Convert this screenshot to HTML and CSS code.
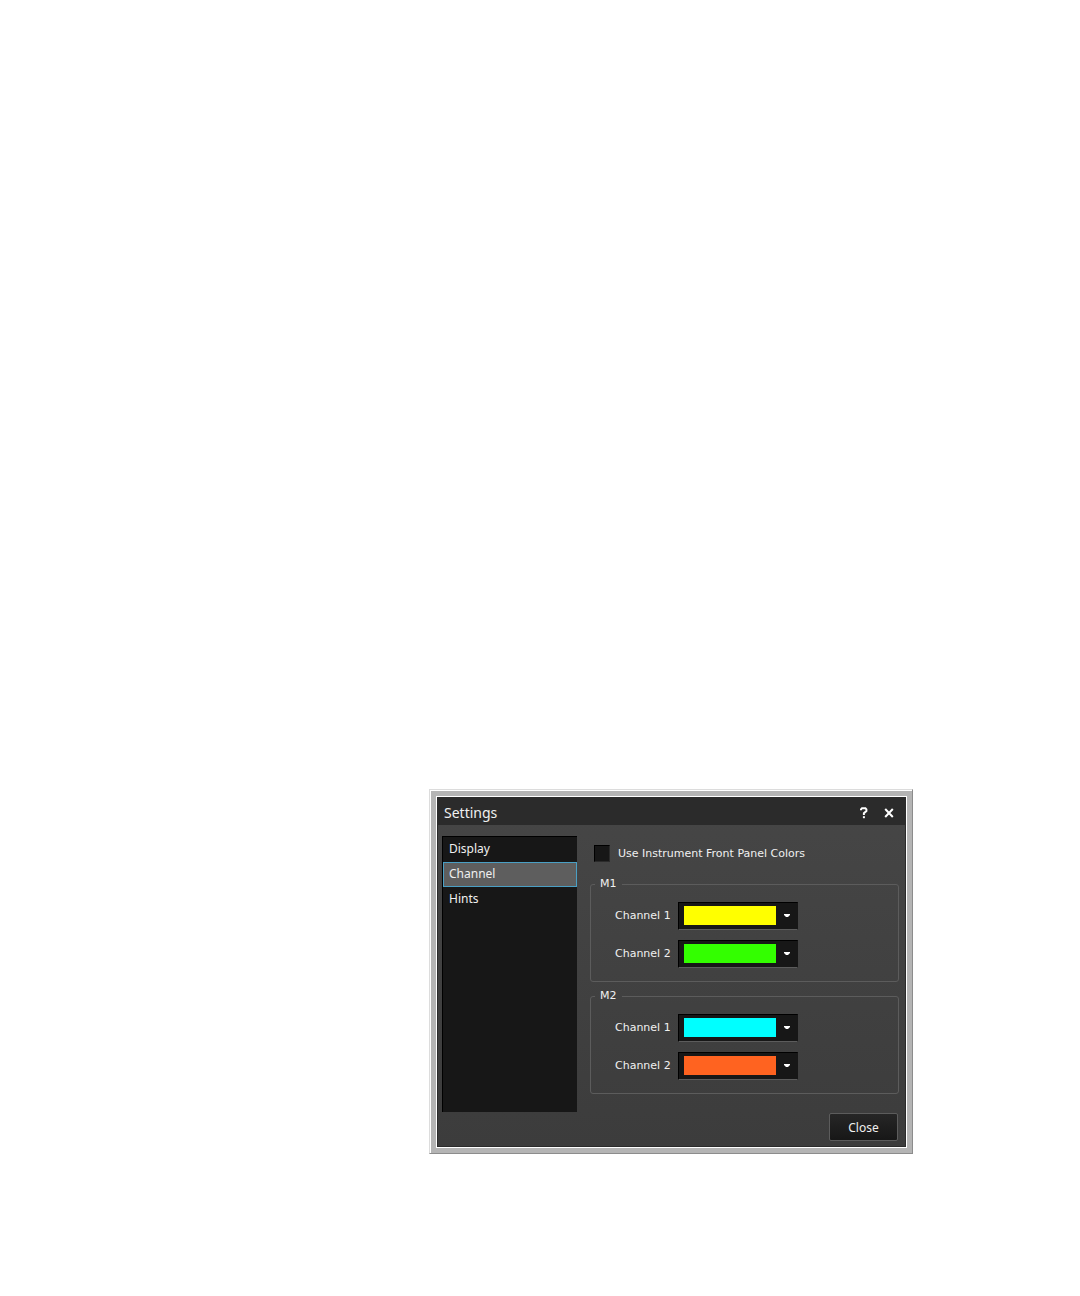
FILE: index.html
```html
<!DOCTYPE html>
<html lang="en">
<head>
    <meta charset="UTF-8">
    <title>Settings</title>
    <link rel="stylesheet" href="styles.css">
</head>
<body>
    <div class="frame">
        <div class="dialog" role="dialog" aria-labelledby="dialog-title">
            <header class="title-bar">
                <h1 id="dialog-title">Settings</h1>
                <button class="title-button" type="button" aria-label="Help">
                    <svg width="8" height="12" viewBox="0 0 8 12">
                        <path d="M1 3.2V2.4L2 1.2H5.4L6.4 2.4V4L3.9 6.2V8" />
                        <path d="M3.9 9.2V11.2" />
                    </svg>
                </button>
                <button class="title-button" type="button" aria-label="Close window">
                    <svg width="10" height="10" viewBox="0 0 10 10">
                        <path d="M1.2 1L8.8 9M8.8 1L1.2 9" />
                    </svg>
                </button>
            </header>

            <div class="content">
                <!-- Settings pages -->
                <nav class="page-list">
                    <a class="page" href="#display">Display</a>
                    <a class="page selected" href="#channel" aria-current="page">Channel</a>
                    <a class="page" href="#hints">Hints</a>
                </nav>

                <!-- Channel colors -->
                <form class="settings">
                    <label class="check-row">
                        <input class="checkbox" type="checkbox">
                        Use Instrument Front Panel Colors
                    </label>

                    <fieldset class="group">
                        <legend>M1</legend>
                        <div class="row">
                            <label for="m1-channel1">Channel 1</label>
                            <div class="combo">
                                <select id="m1-channel1" class="yellow"><option value="yellow"></option></select>
                                <svg class="arrow" width="6" height="3" viewBox="0 0 6 3"><path d="M0 0H6V1L4 3H2L0 1Z" /></svg>
                            </div>
                        </div>
                        <div class="row">
                            <label for="m1-channel2">Channel 2</label>
                            <div class="combo">
                                <select id="m1-channel2" class="green"><option value="green"></option></select>
                                <svg class="arrow" width="6" height="3" viewBox="0 0 6 3"><path d="M0 0H6V1L4 3H2L0 1Z" /></svg>
                            </div>
                        </div>
                    </fieldset>

                    <fieldset class="group">
                        <legend>M2</legend>
                        <div class="row">
                            <label for="m2-channel1">Channel 1</label>
                            <div class="combo">
                                <select id="m2-channel1" class="cyan"><option value="cyan"></option></select>
                                <svg class="arrow" width="6" height="3" viewBox="0 0 6 3"><path d="M0 0H6V1L4 3H2L0 1Z" /></svg>
                            </div>
                        </div>
                        <div class="row">
                            <label for="m2-channel2">Channel 2</label>
                            <div class="combo">
                                <select id="m2-channel2" class="orange"><option value="orange"></option></select>
                                <svg class="arrow" width="6" height="3" viewBox="0 0 6 3"><path d="M0 0H6V1L4 3H2L0 1Z" /></svg>
                            </div>
                        </div>
                    </fieldset>
                </form>
            </div>

            <footer class="buttons">
                <button class="close-button" type="button">Close</button>
            </footer>
        </div>
    </div>
</body>
</html>
```

FILE: styles.css
```css
* {
    box-sizing: border-box;
}

body {
    margin: 0;
    min-height: 100vh;
    padding: 0 167px 142px 429px;
    display: flex;
    align-items: flex-end;
    background: #fff;
    color: #f0f0f0;
    font-family: "Noto Sans", "Open Sans", sans-serif;
    font-size: 12px;
    line-height: 16px;
}

.frame {
    flex: 1;
    padding: 7px 6px 6px 7px;
    border: 1px solid #dcdcdc;
    border-right-color: #8c8c8c;
    border-bottom-color: #8c8c8c;
    background: #b4b4b4;
    box-shadow: inset 1px 1px #fff;
}

.dialog {
    outline: 1px solid #fff;
    border: 1px solid #2b2b2b;
    background: linear-gradient(#464646, #3c3c3c);
}

.title-bar {
    display: flex;
    align-items: center;
    gap: 9px;
    height: 27px;
    padding: 2px 8px 0 6px;
    background: #2b2b2b;
}

.title-bar h1 {
    flex: 1;
    margin: 0;
    font-size: 14px;
    font-weight: normal;
}

.title-button {
    display: flex;
    align-items: center;
    justify-content: center;
    width: 16px;
    height: 16px;
    padding: 0;
    border: none;
    background: none;
}

.title-button svg {
    fill: none;
    stroke: #fff;
    stroke-width: 2px;
}

.content {
    display: flex;
    gap: 13px;
    padding: 11px 6px 0 4px;
}

.page-list {
    width: 135px;
    border: 1px solid #000;
    border-width: 1px 0 0 1px;
    background: #171717;
}

.page {
    display: block;
    height: 25px;
    padding: 3px 5px;
    border: 1px solid transparent;
    color: #f0f0f0;
    text-decoration: none;
}

.selected {
    border-color: #4a9fc4;
    background: #5e5e5e;
}

.settings {
    flex: 1;
    padding: 9px 0 18px;
    font-family: "DejaVu Sans", Verdana, sans-serif;
    font-size: 11px;
}

.check-row {
    display: flex;
    align-items: center;
    gap: 8px;
    margin: 0 0 14px 4px;
}

.checkbox {
    appearance: none;
    width: 16px;
    height: 17px;
    margin: 0;
    border: 1px solid #000;
    border-right-color: #2b2b2b;
    border-bottom-color: #2b2b2b;
    background: #171717;
}

.group {
    display: flex;
    flex-direction: column;
    gap: 10px;
    margin: 0 0 6px;
    padding: 10px 24px 13px;
    border: 1px solid #5c5c5c;
    border-radius: 3px;
}

.group:last-child {
    margin: 0;
}

.group legend {
    margin-left: -20px;
    padding: 0 5px;
}

.row {
    display: flex;
    align-items: center;
}

.row label {
    width: 63px;
}

.combo {
    position: relative;
}

.combo select {
    appearance: none;
    display: block;
    width: 120px;
    height: 28px;
    padding: 3px 21px 4px 5px;
    border: 1px solid;
    border-color: #000 #171717 #5c5c5c #000;
    border-radius: 0;
    background: linear-gradient(var(--color), var(--color)) content-box, #171717;
}

.yellow {
    --color: #ffff00;
}

.green {
    --color: #33ff00;
}

.cyan {
    --color: #00ffff;
}

.orange {
    --color: #ff6320;
}

.arrow {
    position: absolute;
    top: 12px;
    right: 8px;
    fill: #fff;
    pointer-events: none;
}

.buttons {
    display: flex;
    justify-content: flex-end;
    padding: 1px 7px 5px;
}

.close-button {
    width: 69px;
    height: 28px;
    padding: 0;
    border: 1px solid #5c5c5c;
    border-radius: 2px;
    background: linear-gradient(#262626, #171717);
    color: #f0f0f0;
    font-family: inherit;
    font-size: 12px;
}
```
